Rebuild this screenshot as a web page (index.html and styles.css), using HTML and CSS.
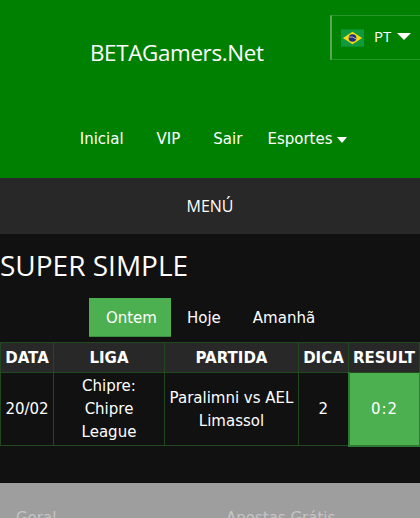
FILE: index.html
```html
<!DOCTYPE html>
<html lang="pt">
<head>
    <meta charset="UTF-8">
    <meta name="viewport" content="width=device-width, initial-scale=1.0">
    <title>BETAGamers.Net</title>
    <link rel="stylesheet" href="styles.css">
</head>
<body>
    <header class="top-bar">
        <div class="brand-row">
            <a class="brand" href="#">BETAGamers.Net</a>
        </div>
        <div class="lang-box">
            <svg class="flag" width="23" height="18" viewBox="0 0 24 18">
                <rect width="24" height="18" fill="#0f9a3c"></rect>
                <polygon points="12,2.5 22,9 12,15.5 2,9" fill="#f7d917"></polygon>
                <circle cx="12" cy="9" r="4" fill="#1c2f7c"></circle>
                <path d="M8.3 8 Q12 7 15.7 10" fill="none" stroke="#dfe6e0" stroke-width="0.8"></path>
            </svg>
            <span class="lang-code">PT</span>
            <span class="caret caret-big"></span>
        </div>
        <nav class="main-nav">
            <a href="#">Inicial</a>
            <a href="#">VIP</a>
            <a href="#">Sair</a>
            <a class="nav-drop" href="#">Esportes <span class="caret"></span></a>
        </nav>
    </header>

    <div class="menu-bar">MENÚ</div>

    <main class="content">
        <h1 class="page-title">SUPER SIMPLE</h1>

        <div class="tabs">
            <a class="tab active" href="#">Ontem</a>
            <a class="tab" href="#">Hoje</a>
            <a class="tab" href="#">Amanhã</a>
        </div>

        <table class="tips">
            <thead>
                <tr>
                    <th class="col-date">DATA</th>
                    <th class="col-league">LIGA</th>
                    <th class="col-match">PARTIDA</th>
                    <th class="col-tip">DICA</th>
                    <th class="col-result">RESULT</th>
                </tr>
            </thead>
            <tbody>
                <tr>
                    <td>20/02</td>
                    <td>Chipre:<br>Chipre<br>League</td>
                    <td>Paralimni vs AEL Limassol</td>
                    <td>2</td>
                    <td class="won">0:2</td>
                </tr>
            </tbody>
        </table>
    </main>

    <footer class="site-footer">
        <span class="foot-title">Geral</span>
        <span class="foot-title">Apostas Grátis</span>
    </footer>
</body>
</html>
```

FILE: styles.css
```css
* {
    margin: 0;
    padding: 0;
    box-sizing: border-box;
}

html, body {
    height: 100%;
    overflow: hidden;
}

body {
    background: #111111;
    color: #ffffff;
    font-family: "DejaVu Sans", sans-serif;
    font-size: 15px;
}

a {
    color: #ffffff;
    text-decoration: none;
}

.top-bar {
    position: relative;
    height: 178px;
    background: #008000;
}

.brand-row {
    height: 104px;
    padding-left: 90px;
    display: flex;
    align-items: center;
}

.brand {
    font-family: "Open Sans", sans-serif;
    font-size: 22.4px;
    letter-spacing: -0.35px;
}

.lang-box {
    position: absolute;
    top: 15px;
    right: 0;
    width: 90px;
    height: 45px;
    display: flex;
    align-items: center;
    padding-left: 9px;
    border: 1px solid #2b962b;
    border-left: 2px solid #5aa85a;
    border-right: 0;
}

.flag {
    display: block;
    flex-shrink: 0;
}

.lang-code {
    font-family: "Open Sans", sans-serif;
    font-size: 15px;
    margin-left: 10px;
    margin-right: 6px;
    margin-top: -3px;
}

.caret {
    display: inline-block;
    width: 0;
    height: 0;
    border-left: 5px solid transparent;
    border-right: 5px solid transparent;
    border-top: 6px solid #ffffff;
    vertical-align: 1px;
}

.caret-big {
    border-left-width: 7px;
    border-right-width: 7px;
    border-top-width: 7px;
    margin-top: -3px;
}

.main-nav {
    display: flex;
    justify-content: center;
    gap: 33px;
    padding-left: 7px;
    padding-top: 3px;
    line-height: 64px;
}

.nav-drop {
    margin-left: -8px;
}

.menu-bar {
    height: 56px;
    background: #282828;
    display: flex;
    align-items: center;
    justify-content: center;
    font-family: "Open Sans", sans-serif;
    font-size: 16px;
}

.page-title {
    font-family: "Open Sans", sans-serif;
    font-size: 28px;
    font-weight: 400;
    line-height: 38px;
    margin-top: 12px;
}

.tabs {
    display: flex;
    justify-content: center;
    margin-top: 14px;
    height: 39px;
}

.tab {
    display: flex;
    align-items: center;
    padding: 1px 16px 0;
}

.tab.active {
    padding-left: 17px;
    padding-right: 14px;
    background: #4caf50;
    border-bottom: 1px solid #3c8f40;
}

.tips {
    width: 419px;
    margin-top: 5px;
    border-collapse: collapse;
    table-layout: fixed;
    text-align: center;
}

.tips th, .tips td {
    border: 1px solid #22481f;
}

.tips th {
    height: 30px;
    background: #282828;
    font-size: 15px;
    font-weight: 700;
}

.tips td {
    height: 73px;
    line-height: 23px;
    padding: 1px 0 0;
}

.col-date { width: 53px; }
.col-league { width: 111px; }
.col-match { width: 134px; }
.col-tip { width: 50px; }
.col-result { width: 71px; }

.tips td.won {
    padding-left: 1px;
    background: #4caf50;
    border: 2px solid #2f7a33;
    border-top-width: 0;
    letter-spacing: 1px;
}

.site-footer {
    margin-top: 36px;
    height: 60px;
    background: #9e9e9e;
    display: grid;
    grid-template-columns: 210px 1fr;
    padding: 26px 0 0 16px;
}

.foot-title {
    font-size: 15px;
    color: #c4c4c4;
}
```
